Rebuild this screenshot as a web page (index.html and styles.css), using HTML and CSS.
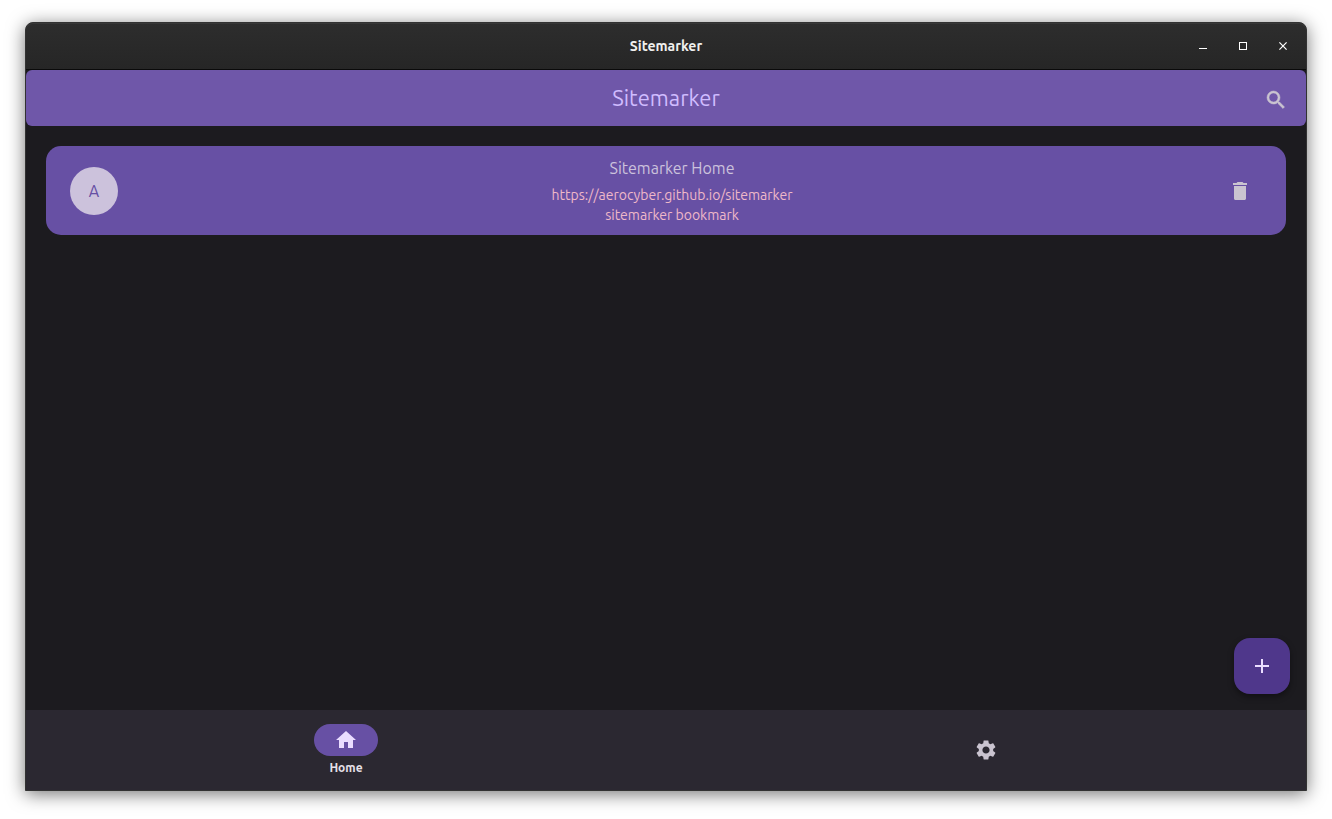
FILE: index.html
```html
<!DOCTYPE html>
<html lang="en">

<head>
    <meta charset="UTF-8">
    <meta name="viewport" content="width=device-width, initial-scale=1">
    <title>Sitemarker</title>
    <link rel="stylesheet" href="styles.css">
</head>

<body>
    <div class="window">
        <div class="titlebar">
            <span class="titlebar-name">Sitemarker</span>
            <div class="window-controls">
                <button type="button" aria-label="Minimize">
                    <svg width="8" height="8" viewBox="0 0 8 8"><path d="M0 6h8v1H0z" /></svg>
                </button>
                <button type="button" aria-label="Maximize">
                    <svg width="8" height="8" viewBox="0 0 8 8"><path d="M0 0h8v8H0zM1 1v6h6V1z" fill-rule="evenodd" /></svg>
                </button>
                <button type="button" aria-label="Close">
                    <svg width="8" height="8" viewBox="0 0 8 8"><path d="M.4.4l7.2 7.2M7.6.4L.4 7.6" stroke="#fff" stroke-width="1.2" /></svg>
                </button>
            </div>
        </div>

        <header class="app-bar">
            <h1>Sitemarker</h1>
            <button type="button" class="icon-button search-button" aria-label="Search">
                <svg width="24" height="24" viewBox="0 0 24 24"><path stroke="currentColor" stroke-width=".5" d="M15.5 14h-.79l-.28-.27A6.47 6.47 0 0 0 16 9.5 6.5 6.5 0 1 0 9.5 16c1.61 0 3.09-.59 4.23-1.57l.27.28v.79l5 4.99L20.49 19l-4.99-5zm-6 0C7.01 14 5 11.99 5 9.5S7.01 5 9.5 5 14 7.01 14 9.5 11.99 14 9.5 14z" /></svg>
            </button>
        </header>

        <main class="content">
            <ul class="bookmarks">
                <li class="bookmark">
                    <span class="avatar">A</span>
                    <div class="bookmark-text">
                        <h2>Sitemarker Home</h2>
                        <a href="https://aerocyber.github.io/sitemarker">https://aerocyber.github.io/sitemarker</a>
                        <p>sitemarker bookmark</p>
                    </div>
                    <button type="button" class="icon-button" aria-label="Delete">
                        <svg width="24" height="24" viewBox="0 0 24 24"><path d="M6 19.5c0 .8.7 1.5 1.5 1.5h9c.8 0 1.5-.7 1.5-1.5V7H6v12.5zM19 4h-3.5l-1-1h-5l-1 1H5v2h14V4z" /></svg>
                    </button>
                </li>
            </ul>

            <button type="button" class="fab" aria-label="Add bookmark">
                <svg width="24" height="24" viewBox="0 0 24 24"><path d="M19 13h-6v6h-2v-6H5v-2h6V5h2v6h6v2z" /></svg>
            </button>
        </main>

        <nav class="bottom-nav">
            <a href="#home" class="nav-item active">
                <span class="nav-icon">
                    <svg width="24" height="24" viewBox="0 0 24 24"><path d="M10 20v-6h4v6h5v-8h3L12 3 2 12h3v8z" /></svg>
                </span>
                <span class="nav-label">Home</span>
            </a>
            <a href="#settings" class="nav-item" aria-label="Settings">
                <span class="nav-icon">
                    <svg width="24" height="24" viewBox="0 0 24 24"><path d="M19.14 12.94c.04-.3.06-.61.06-.94 0-.32-.02-.64-.07-.94l2.03-1.58c.18-.14.23-.41.12-.61l-1.92-3.32c-.12-.22-.37-.29-.59-.22l-2.39.96c-.5-.38-1.03-.7-1.62-.94l-.36-2.54c-.04-.24-.24-.41-.48-.41h-3.84c-.24 0-.43.17-.47.41l-.36 2.54c-.59.24-1.13.57-1.62.94l-2.39-.96c-.22-.08-.47 0-.59.22L2.74 8.87c-.12.21-.08.47.12.61l2.03 1.58c-.05.3-.09.63-.09.94s.02.64.07.94l-2.03 1.58c-.18.14-.23.41-.12.61l1.92 3.32c.12.22.37.29.59.22l2.39-.96c.5.38 1.03.7 1.62.94l.36 2.54c.05.24.24.41.48.41h3.84c.24 0 .44-.17.47-.41l.36-2.54c.59-.24 1.13-.56 1.62-.94l2.39.96c.22.08.47 0 .59-.22l1.92-3.32c.12-.22.07-.47-.12-.61l-2.01-1.58zM12 15.6c-1.98 0-3.6-1.62-3.6-3.6s1.62-3.6 3.6-3.6 3.6 1.62 3.6 3.6-1.62 3.6-3.6 3.6z" /></svg>
                </span>
            </a>
        </nav>
    </div>
</body>

</html>
```
FILE: styles.css
```css
* {
    margin: 0;
    padding: 0;
    box-sizing: border-box;
}

body {
    font-family: Ubuntu, "Noto Sans", sans-serif;
    min-height: 100vh;
    padding: 22px 25px 28px;
    background: #fff;
    color: #cac4d0;
    display: flex;
}

button {
    border: none;
    background: none;
    color: inherit;
    font: inherit;
    cursor: pointer;
    display: flex;
    align-items: center;
    justify-content: center;
}

a {
    color: inherit;
    text-decoration: none;
}

svg {
    display: block;
    fill: currentColor;
}

.window {
    flex: 1;
    display: flex;
    flex-direction: column;
    background: #1c1b1f;
    border: 1px solid #323232;
    border-radius: 8px 8px 0 0;
    box-shadow: 0 3px 18px rgba(0, 0, 0, 0.55);
}

/* Title bar */
.titlebar {
    display: grid;
    grid-template-columns: 1fr auto 1fr;
    align-items: center;
    height: 47px;
    padding: 0 3px;
    background: linear-gradient(#2d2d2d, #262626);
    border-bottom: 1px solid #0a0a0a;
    border-radius: 7px 7px 0 0;
    box-shadow: inset 0 1px #383838;
    color: #fff;
}

.titlebar-name {
    grid-column: 2;
    font-size: 14px;
    font-weight: 600;
    color: #f0f0ee;
}

.window-controls {
    display: flex;
    justify-content: flex-end;
}

.window-controls button {
    width: 40px;
    height: 40px;
}

/* App bar */
.app-bar {
    display: grid;
    grid-template-columns: 1fr auto 1fr;
    align-items: center;
    height: 56px;
    padding: 0 6px;
    background: #6f57a9;
    border-radius: 6px;
}

.app-bar h1 {
    grid-column: 2;
    font-size: 22px;
    font-weight: 400;
    line-height: 28px;
    color: #d0bcff;
}

.icon-button {
    width: 48px;
    height: 48px;
    border-radius: 24px;
}

.search-button {
    height: 52px;
    align-self: end;
    justify-self: end;
}

/* Bookmark list */
.content {
    flex: 1;
    position: relative;
    padding: 20px;
}

.bookmarks {
    list-style: none;
}

.bookmark {
    display: flex;
    align-items: center;
    padding: 10px 22px 10px 24px;
    background: #6750a4;
    border-radius: 15px;
}

.avatar {
    width: 48px;
    height: 48px;
    border-radius: 50%;
    background: #ccc2dc;
    color: #6750a4;
    font-size: 16px;
    line-height: 48px;
    text-align: center;
}

.bookmark-text {
    flex: 1;
    margin: 0 6px 0 16px;
    text-align: center;
    font-size: 14px;
    line-height: 20px;
    color: #efb8c8;
}

.bookmark-text h2 {
    margin-bottom: 5px;
    font-size: 16px;
    font-weight: 400;
    line-height: 24px;
    color: #ccc2dc;
}

.bookmark-text a {
    display: block;
}

.fab {
    position: absolute;
    right: 16px;
    bottom: 16px;
    width: 56px;
    height: 56px;
    border-radius: 16px;
    background: #4f378b;
    color: #eaddff;
    box-shadow: 0 3px 6px rgba(0, 0, 0, 0.4);
}

/* Bottom navigation */
.bottom-nav {
    display: flex;
    height: 80px;
    background: #2b2831;
}

.nav-item {
    flex: 1;
    display: flex;
    flex-direction: column;
    align-items: center;
    justify-content: center;
    gap: 4px;
}

.nav-icon {
    display: flex;
    align-items: center;
    justify-content: center;
    width: 64px;
    height: 32px;
    border-radius: 16px;
}

.active .nav-icon {
    background: #6750a4;
    color: #eaddff;
}

.nav-label {
    font-size: 12px;
    font-weight: 600;
    line-height: 16px;
    color: #e6e0e9;
}
```
